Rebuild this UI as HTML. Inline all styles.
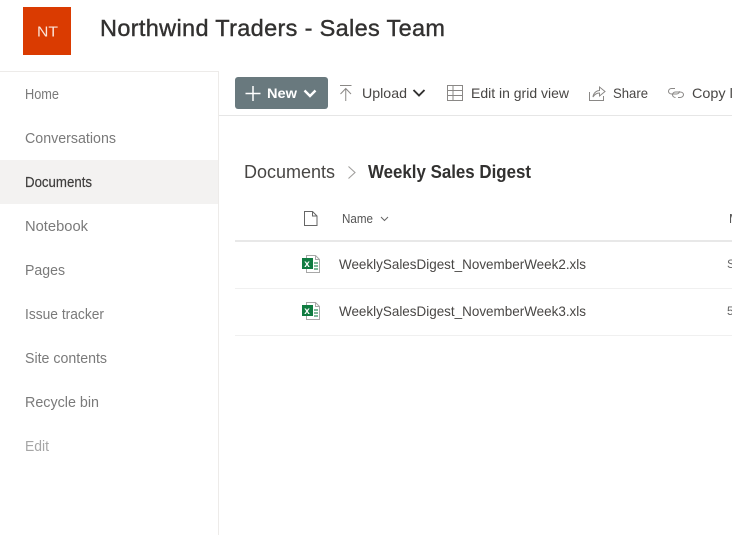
<!DOCTYPE html>
<html lang="en">
<head>
<meta charset="utf-8">
<title>Northwind Traders - Sales Team</title>
<style>
html,body{margin:0;padding:0;background:#fff;width:732px;height:535px;overflow:hidden}
svg{display:block}
text{font-family:"Liberation Sans",sans-serif;fill:#323130}
.nav{font-size:14.5px;fill:#7a7a7a}
.cmd{font-size:14px;fill:#484644}
.file{font-size:14px;fill:#484644}
</style>
</head>
<body>
<svg width="732" height="535" viewBox="0 0 732 535" xmlns="http://www.w3.org/2000/svg">
<rect width="732" height="535" fill="#fff"/>

<!-- Header -->
<rect x="23" y="7" width="48" height="48" fill="#da3b01"/>
<text x="37" y="36.500" font-size="15" style="fill:#fbe3d8" textLength="21" lengthAdjust="spacingAndGlyphs">NT</text>
<text x="100" y="36" font-size="23.500" stroke="#323130" stroke-width="0.4" textLength="345" lengthAdjust="spacing">Northwind Traders - Sales Team</text>

<!-- Sidebar -->
<path d="M0 71.500H218.500V535" fill="none" stroke="#edebe9"/>
<rect x="0" y="160" width="218" height="44" fill="#f3f2f1"/>
<text class="nav" x="25" y="99" font-size="15" style="font-size:15px" textLength="34" lengthAdjust="spacingAndGlyphs">Home</text>
<text class="nav" x="25" y="143" textLength="91" lengthAdjust="spacingAndGlyphs">Conversations</text>
<text class="nav" x="25" y="187" style="font-size:15px;fill:#3f3e3d" textLength="67" lengthAdjust="spacingAndGlyphs" stroke="#3f3e3d" stroke-width="0.2">Documents</text>
<text class="nav" x="25" y="231" textLength="63" lengthAdjust="spacingAndGlyphs">Notebook</text>
<text class="nav" x="25" y="275" textLength="40" lengthAdjust="spacingAndGlyphs">Pages</text>
<text class="nav" x="25" y="319" textLength="79" lengthAdjust="spacingAndGlyphs">Issue tracker</text>
<text class="nav" x="25" y="363" textLength="82" lengthAdjust="spacingAndGlyphs">Site contents</text>
<text class="nav" x="25" y="407" textLength="74" lengthAdjust="spacingAndGlyphs">Recycle bin</text>
<text class="nav" x="25" y="451" textLength="24" lengthAdjust="spacingAndGlyphs" style="fill:#a6a6a6">Edit</text>

<!-- Command bar -->
<path d="M219 115.500H732" stroke="#e6e6e6" fill="none"/>
<rect x="235" y="77" width="93" height="32" rx="3" fill="#69797e"/>
<path d="M245.500 93.500H260.500M253 86V101" stroke="#fff" stroke-width="1.500" fill="none"/>
<text x="267" y="98" font-size="14" font-weight="700" style="fill:#fff" textLength="30" lengthAdjust="spacingAndGlyphs">New</text>
<path d="M304.500 90.500L310 96L315.500 90.500" stroke="#fff" stroke-width="2.400" fill="none"/>

<path d="M340 85.500H351.500M345.750 101V88.500M340.500 94L345.750 88.500L351 94" stroke="#8a8886" stroke-width="1" fill="none"/>
<text class="cmd" x="362" y="98" textLength="45" lengthAdjust="spacingAndGlyphs">Upload</text>
<path d="M413.500 90L419 95.500L424.500 90" stroke="#323130" stroke-width="1.900" fill="none"/>

<path d="M447.500 85.500H462.500V100.500H447.500ZM447.500 90.500H462.500M447.500 95.500H462.500M453 85.500V100.500" stroke="#8a8886" stroke-width="1" fill="none"/>
<text class="cmd" x="471" y="98" textLength="98" lengthAdjust="spacingAndGlyphs">Edit in grid view</text>

<path d="M589.500 92V100.500H603.500V96M593 97C593.500 92.500 597 90.500 599.500 90.500V87L605 91.500L599.500 96V93C597 93 594.500 94.500 593 97Z" stroke="#8a8886" stroke-width="1" fill="none"/>
<text class="cmd" x="613" y="98" textLength="35" lengthAdjust="spacingAndGlyphs">Share</text>

<path d="M675 88.500H671.500C669.500 88.500 668.500 90 668.500 91.250C668.500 92.500 669.500 94 671.500 94H676.500C678.500 94 679.500 92.500 679.500 91.250M678 97.500H680C682 97.500 683.500 96 683.500 94.750C683.500 93 682 92 680 92H675.500C673.500 92 672.500 93.500 672.500 94.750C672.500 96 673.500 97.500 675.500 97.500" stroke="#8a8886" stroke-width="1" fill="none"/>
<text class="cmd" x="692" y="98" textLength="44" lengthAdjust="spacingAndGlyphs">Copy li</text>

<!-- Breadcrumb -->
<text x="244" y="178" font-size="18.500" style="fill:#484644" textLength="91" lengthAdjust="spacingAndGlyphs">Documents</text>
<path d="M348.500 166.500L355 172.500L348.500 178.500" stroke="#a19f9d" stroke-width="1.100" fill="none"/>
<text x="368" y="178" font-size="18.500" font-weight="700" style="fill:#323130" textLength="163" lengthAdjust="spacingAndGlyphs">Weekly Sales Digest</text>

<!-- List header -->
<path d="M304.500 211.500H312.500L317 216V225.500H304.500Z" stroke="#666" stroke-width="1" fill="#fff"/>
<path d="M312.500 211.500V216H317" stroke="#666" stroke-width="1" fill="none"/>
<text x="342" y="223" font-size="12.500" style="fill:#555" textLength="31" lengthAdjust="spacingAndGlyphs">Name</text>
<path d="M381 217L384.500 220.500L388 217" stroke="#666" stroke-width="1" fill="none"/>
<text x="729" y="223" font-size="12.500" style="fill:#555">M</text>
<path d="M235 241H732" stroke="#e8e8e8" stroke-width="2"/>

<!-- Row 1 -->
<g>
<path d="M306.500 255.500H315.500L319.500 259.500V272.500H306.500Z" stroke="#a8a8a8" stroke-width="1" fill="#fff"/>
<path d="M315.500 255.500V259.500H319.500" stroke="#a8a8a8" stroke-width="1" fill="none"/>
<path d="M314 262H318V264H314ZM314 265H318V267H314ZM314 268H318V270H314Z" fill="#7fb99a"/>
<rect x="302" y="258" width="11" height="11" fill="#107c41"/>
<text x="304.300" y="267" font-size="10" font-weight="700" style="fill:#fff">x</text>
</g>
<text class="file" x="339" y="269" textLength="247" lengthAdjust="spacingAndGlyphs">WeeklySalesDigest_NovemberWeek2.xls</text>
<text x="727" y="268" font-size="12" style="fill:#666">S</text>
<path d="M235 288.500H732" stroke="#f0f0f0"/>

<!-- Row 2 -->
<g>
<path d="M306.500 302.500H315.500L319.500 306.500V319.500H306.500Z" stroke="#a8a8a8" stroke-width="1" fill="#fff"/>
<path d="M315.500 302.500V306.500H319.500" stroke="#a8a8a8" stroke-width="1" fill="none"/>
<path d="M314 309H318V311H314ZM314 312H318V314H314ZM314 315H318V317H314Z" fill="#7fb99a"/>
<rect x="302" y="305" width="11" height="11" fill="#107c41"/>
<text x="304.300" y="314" font-size="10" font-weight="700" style="fill:#fff">x</text>
</g>
<text class="file" x="339" y="316" textLength="247" lengthAdjust="spacingAndGlyphs">WeeklySalesDigest_NovemberWeek3.xls</text>
<text x="727" y="315" font-size="12" style="fill:#666">5</text>
<path d="M235 335.500H732" stroke="#f0f0f0"/>
</svg>
</body>
</html>
